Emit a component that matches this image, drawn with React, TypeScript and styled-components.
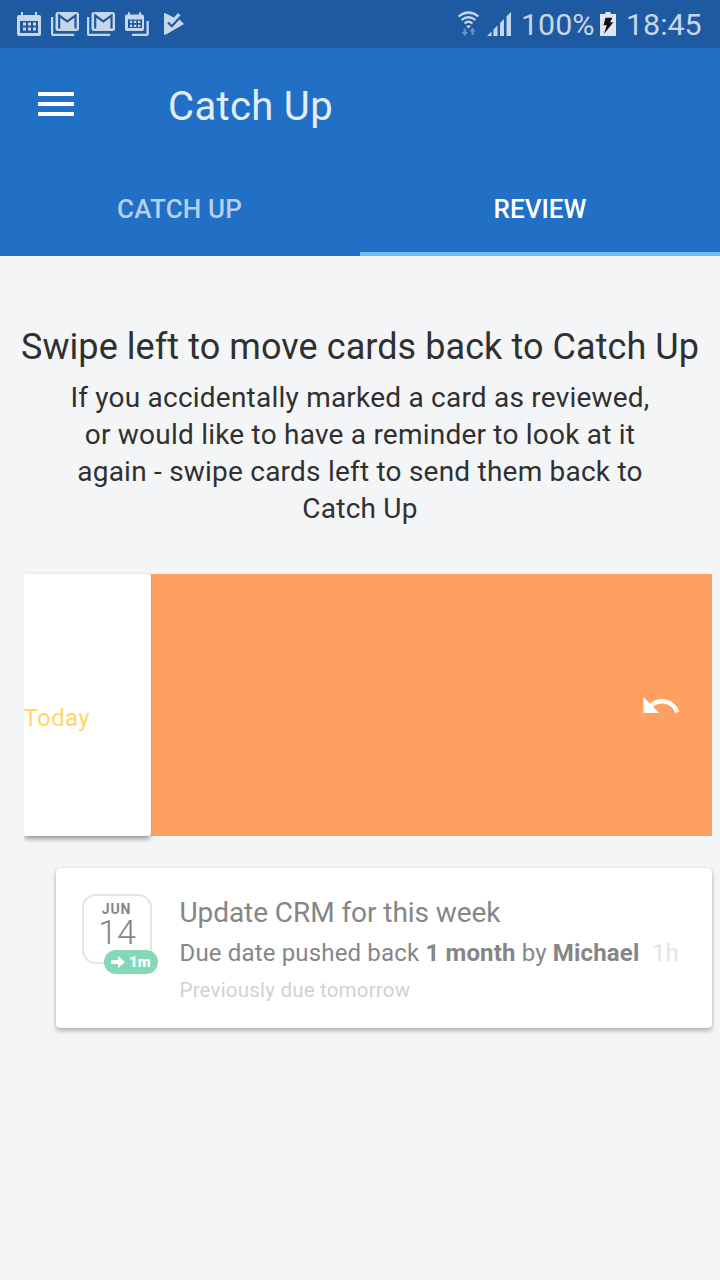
import React from 'react';
import styled, { createGlobalStyle } from 'styled-components';

const GlobalStyle = createGlobalStyle`
  * { box-sizing: border-box; }
  body { margin: 0; background: #f4f5f7; font-family: Roboto, "Liberation Sans", sans-serif; }
`;

const Screen = styled.main`
  width: 720px;
  height: 1280px;
  overflow: hidden;
  background: #f4f5f7;
`;

const StatusBar = styled.div`
  height: 48px;
  background: #1e5aa2;
  color: #c7d6e8;
  display: flex;
  justify-content: space-between;
`;

const StatusText = styled.span<{ $width: number; $left: number }>`
  font-size: 30.4px;
  line-height: 50px;
  width: ${p => p.$width}px;
  margin-left: ${p => p.$left}px;
  white-space: nowrap;
`;

const StatusRight = styled.div`
  display: flex;
  width: 266px;
`;

const Header = styled.header`
  background: #2170c5;
  height: 208px;
`;

const AppBar = styled.div`
  height: 112px;
  display: flex;
  align-items: center;
  padding-left: 38px;
`;

const MenuButton = styled.button`
  width: 36px;
  height: 24px;
  padding: 0;
  border: 0;
  background: none;
  display: flex;
  flex-direction: column;
  justify-content: space-between;
`;

const MenuLine = styled.span`
  height: 4px;
  width: 36px;
  background: #fff;
`;

const AppTitle = styled.h1`
  margin: 5px 0 0 94px;
  font-size: 40px;
  font-weight: 400;
  line-height: 48px;
  letter-spacing: 0.35px;
  color: #e3edf8;
`;

const Tabs = styled.nav`
  display: grid;
  grid-template-columns: 360px 360px;
  height: 96px;
`;

const Tab = styled.div<{ $active?: boolean }>`
  text-align: center;
  font-size: 26px;
  font-weight: 500;
  line-height: 98px;
  height: 96px;
  letter-spacing: ${p => (p.$active ? 0 : 0.15)}px;
  padding-right: ${p => (p.$active ? 0 : 1)}px;
  color: ${p => (p.$active ? '#fff' : '#b5cfec')};
  border-bottom: 4px solid ${p => (p.$active ? '#6ebefa' : 'transparent')};
`;

const Intro = styled.section`
  height: 318px;
  padding-top: 69px;
  text-align: center;
  color: #303030;
`;

const IntroTitle = styled.h2`
  margin: 0;
  font-size: 36px;
  line-height: 44px;
  font-weight: 400;
  letter-spacing: 0.07px;
  white-space: nowrap;
`;

const IntroText = styled.p`
  margin: 10px 0 0;
  font-size: 28px;
  line-height: 37px;
  letter-spacing: 0.22px;
`;

const SwipeRow = styled.section`
  margin: 0 8px 0 24px;
  height: 262px;
  display: flex;
  background: linear-gradient(to right, #e4e5e7 127px, #ff9f60 127px);
  clip-path: inset(-8px 0 -12px 0);
`;

const SwipedCard = styled.article`
  width: 127px;
  height: 262px;
  background: #fff;
  border-radius: 0 3px 3px 0;
  box-shadow: 0 4px 5px -1px rgba(0, 0, 0, 0.36), 0 0 2px rgba(0, 0, 0, 0.16);
  padding-top: 129px;
  color: #ffd66c;
  font-size: 24px;
  line-height: 30px;
  letter-spacing: 0.4px;
  text-indent: -0.5px;
`;

const UndoArea = styled.div`
  position: relative;
  flex: 1;
  background: #ff9f60;
  box-shadow: inset 1px 0 1px rgba(0, 0, 0, 0.06);
  display: flex;
  justify-content: flex-end;
  padding: 111px 30.5px 0 0;
`;

const Card = styled.article`
  margin: 32px 8px 0 56px;
  height: 160px;
  background: #fff;
  border-radius: 4px;
  box-shadow: 0 3px 4px rgba(0, 0, 0, 0.25), 0 0 2px rgba(0, 0, 0, 0.16);
  display: flex;
  padding-left: 26px;
`;

const DateTile = styled.div`
  position: relative;
  margin-top: 26px;
  width: 70px;
  height: 70px;
  border: 2px solid #e4e4e4;
  border-radius: 14px;
  text-align: center;
  color: #868686;
`;

const Month = styled.div`
  margin-top: 5px;
  font-size: 14px;
  font-weight: 700;
  line-height: 16px;
  letter-spacing: 0.9px;
  padding-right: 1px;
`;

const Day = styled.div`
  font-size: 34px;
  font-weight: 300;
  line-height: 30px;
`;

const Badge = styled.div`
  position: absolute;
  left: 20px;
  top: 53.5px;
  width: 54px;
  height: 24px;
  border-radius: 12px;
  background: #83d9b6;
  color: #fff;
  display: flex;
  align-items: center;
  padding: 1px 0 0 7px;
  gap: 4px;
  font-size: 15px;
  font-weight: 900;
`;

const CardBody = styled.div`
  margin-left: 27.5px;
  padding-top: 28px;
  white-space: nowrap;
  color: #868686;
`;

const CardTitle = styled.div`
  font-size: 28px;
  line-height: 34px;
  letter-spacing: -0.07px;
`;

const CardLine = styled.div`
  margin-top: 8px;
  font-size: 24px;
  line-height: 30px;
  letter-spacing: 0.16px;
  b { font-weight: 700; }
`;

const Age = styled.span`
  margin-left: 12.5px;
  color: #e4e4e4;
`;

const CardNote = styled.div`
  margin-top: 10px;
  font-size: 20.5px;
  line-height: 24px;
  letter-spacing: 0.2px;
  color: #ced2d6;
`;

const NotificationIcons = () => (
  <svg width="200" height="48" viewBox="0 0 200 48" fill="#c7d6e8">
    <path fillRule="evenodd" d="M19 15h2v-3h2v3h12v-3h2v3h2q2 0 2 2v17q0 2-2 2H19q-2 0-2-2V17q0-2 2-2zM20 21v12h18V21z" />
    <path d="M23 22.500h3v3h-3zM28 22.500h3v3h-3zM33 22.500h3v3h-3zM23 27.500h3v3h-3zM28 27.500h3v3h-3zM33 27.500h3v3h-3z" />
    {[0, 36].map(x => (
      <g key={x} transform={`translate(${x} 0)`}>
        <path d="M51 17h2.200v16.800h21v2.200H53q-2 0-2-2z" />
        <rect x="55.500" y="12" width="23.500" height="19" rx="2.500" />
        <path d="M59.200 28.500V15.500l8 5.800 8.300-5.800v13" fill="none" stroke="#1e5aa2" strokeWidth="2.200" />
      </g>
    ))}
    <path fillRule="evenodd" d="M127 14.500h1v-2.300h2v2.300h9v-2.300h2v2.300h1q2 0 2 2V29q0 2-2 2h-15q-2 0-2-2V16.500q0-2 2-2zM128 19.500v8.500h14v-8.500z" />
    <path d="M130 20.700h2.300v2.300H130zM134 20.700h2.300v2.300H134zM138 20.700h2.300v2.300H138zM130 24.800h2.300v2.300H130zM134 24.800h2.300v2.300H134zM138 24.800h2.300v2.300H138zM146.500 21h2.300v13q0 2-2 2H132v-2.300h14.500z" />
    <path d="M164 14q0-1.500 1.500-.8l8.500 4.300 4-4.500 2.500 2.300-1 4.200 4.500 4.500-18 10.500q-2 .8-2-1z" />
    <path d="M168 22.500l3.800 3.700 9-9.700" fill="none" stroke="#1e5aa2" strokeWidth="2.200" />
  </svg>
);

const WifiSignal = () => (
  <svg width="60" height="48" viewBox="454 0 60 48" fill="none">
    <g stroke="#c7d6e8" strokeWidth="2.200">
      <path d="M458.500 16.500q10-8 20 0" />
      <path d="M461.500 20q7-5.500 14 0" />
      <path d="M464.500 23.500q4-3.500 8 0" />
    </g>
    <path d="M465.800 25.500h5.400l-2.700 3z" fill="#c7d6e8" />
    <path d="M463.500 28.500h2.500v3.500h2l-3.200 4-3.300-4h2zM471.500 35v-3.500h-2l3-4 3.200 4h-2V35z" fill="#6a92c4" />
    <path d="M487 36l4.500-4.500V36zM493.500 36v-6.500l4-4V36zM500 36V23l4-4v17zM506.500 36V16.500l4.500-4.500v24z" fill="#c7d6e8" />
  </svg>
);

const Battery = () => (
  <svg width="17" height="48" viewBox="600 0 17 48">
    <path d="M600 14h5.300v-2h5.400v2h5.300v22h-16z" fill="#dfe7f4" />
    <path d="M605.500 17.700h7l-2.500 4.600h3.300L604 34l2.700-8.700h-3.200z" fill="#111" />
  </svg>
);

export default function App() {
  return (
    <Screen>
      <GlobalStyle />
      <StatusBar>
        <NotificationIcons />
        <StatusRight>
          <WifiSignal />
          <StatusText $left={7} $width={79}>100%</StatusText>
          <Battery />
          <StatusText $left={9} $width={78}>18:45</StatusText>
        </StatusRight>
      </StatusBar>
      <Header>
        <AppBar>
          <MenuButton aria-label="Menu"><MenuLine /><MenuLine /><MenuLine /></MenuButton>
          <AppTitle>Catch Up</AppTitle>
        </AppBar>
        <Tabs>
          <Tab>CATCH UP</Tab>
          <Tab $active>REVIEW</Tab>
        </Tabs>
      </Header>
      <Intro>
        <IntroTitle>Swipe left to move cards back to Catch Up</IntroTitle>
        <IntroText>
          If you accidentally marked a card as reviewed,<br />
          or would like to have a reminder to look at it<br />
          again - swipe cards left to send them back to<br />
          Catch Up
        </IntroText>
      </Intro>
      <SwipeRow>
        <SwipedCard>Today</SwipedCard>
        <UndoArea>
          <svg width="42" height="42" viewBox="0 0 24 24" fill="#fff">
            <path d="M12.500 8c-2.650 0-5.050.990-6.900 2.600L2 7v9h9l-3.620-3.620c1.390-1.160 3.160-1.880 5.120-1.880 3.540 0 6.550 2.310 7.600 5.500l2.370-.780C21.080 11.030 17.150 8 12.500 8z" />
          </svg>
        </UndoArea>
      </SwipeRow>
      <Card>
        <DateTile>
          <Month>JUN</Month>
          <Day>14</Day>
          <Badge>
            <svg width="14" height="12" viewBox="0 0 14 12" fill="#fff"><path d="M0 4h7V0l7 6-7 6V8H0z" /></svg>
            1m
          </Badge>
        </DateTile>
        <CardBody>
          <CardTitle>Update CRM for this week</CardTitle>
          <CardLine>Due date pushed back <b>1 month</b> by <b>Michael</b><Age>1h</Age></CardLine>
          <CardNote>Previously due tomorrow</CardNote>
        </CardBody>
      </Card>
    </Screen>
  );
}
